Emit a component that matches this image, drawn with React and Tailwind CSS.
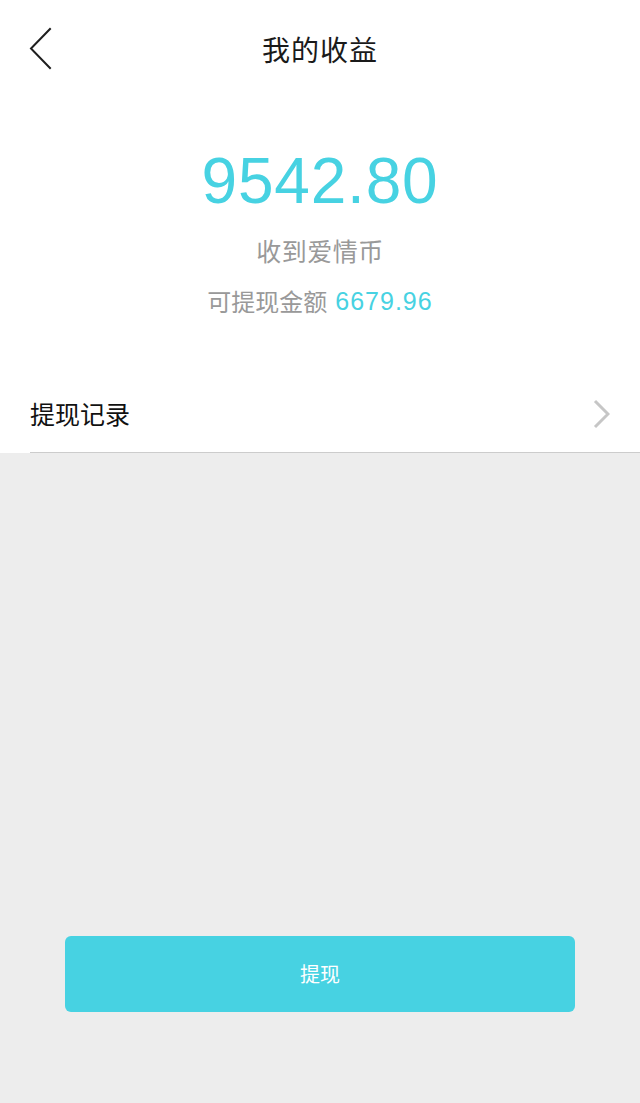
import React from 'react';

const cjk = { fontFamily: '"Noto Sans CJK SC", "Noto Sans", sans-serif' };
const num = { fontFamily: '"Liberation Sans", "Noto Sans CJK SC", sans-serif' };

const BackIcon = () => (
  <svg width="32" height="48" viewBox="0 0 32 48" fill="none">
    <polyline points="28,4 9,23.5 28,43" stroke="#1f1f1f" strokeWidth="2" strokeLinecap="square" />
  </svg>
);

const ChevronRight = () => (
  <svg width="18" height="30" viewBox="0 0 18 30" fill="none">
    <polyline points="3,2 16,15 3,28" stroke="#c6c6c6" strokeWidth="3" />
  </svg>
);

const App = () => {
  return (
    <div className="flex flex-col min-h-[1103px] h-screen bg-[#ededed]" style={cjk}>
      <div className="bg-white">
        <header className="grid grid-cols-[80px_1fr_80px] h-[98px] items-center">
          <button className="ml-[22px] w-[32px]">
            <BackIcon />
          </button>
          <h1 className="text-center text-[28px] leading-[28px] text-[#1a1a1a] tracking-[1px]">我的收益</h1>
          <div />
        </header>

        <section className="flex flex-col items-center pt-[51px]">
          <div className="text-[64px] leading-[64px] text-[#47d2e2] tracking-[0.8px]" style={num}>9542.80</div>
          <div className="mt-[25px] text-[25px] leading-[25px] text-[#999999] tracking-[0.5px]">收到爱情币</div>
          <div className="mt-[26px] flex items-center text-[24px] leading-[24px] text-[#999999]">
            <span>可提现金额</span>
            <span className="ml-[8px] text-[25px] text-[#47d2e2] tracking-[1px]" style={num}>6679.96</span>
          </div>
        </section>

        <div className="mt-[65px] ml-[30px] pr-[30px] pb-[3px] h-[75px] flex items-center justify-between border-b border-[#cccccc]">
          <span className="text-[25px] leading-[25px] text-[#111111]">提现记录</span>
          <ChevronRight />
        </div>
      </div>

      <div className="flex-1 flex flex-col justify-end pb-[91px]">
        <button className="mx-[65px] h-[76px] rounded-[6px] bg-[#47d2e2] text-white text-[20px]">
          提现
        </button>
      </div>
    </div>
  );
};

export default App;
